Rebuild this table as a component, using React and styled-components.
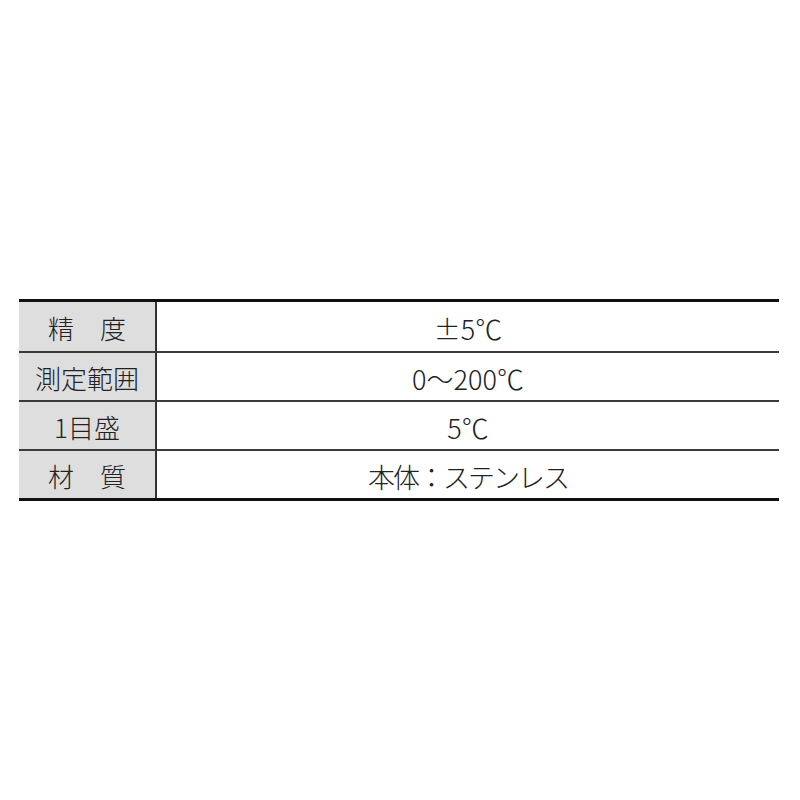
import React from "react";
import styled, { createGlobalStyle } from "styled-components";

const GlobalStyle = createGlobalStyle`
  html, body {
    margin: 0;
    padding: 0;
    background: #ffffff;
  }
  body {
    font-family: "Noto Sans CJK JP", "Noto Sans", sans-serif;
    color: #222222;
  }
`;

const Page = styled.div`
  width: 800px;
  height: 800px;
  box-sizing: border-box;
  padding: 299px 21px 0 19px;
`;

const Table = styled.div`
  display: grid;
  grid-template-columns: 138px 1fr;
  border-top: 3px solid #111111;
  border-bottom: 3px solid #111111;
`;

const Label = styled.div`
  height: 49px;
  display: flex;
  align-items: center;
  justify-content: center;
  padding-top: 3px;
  box-sizing: border-box;
  background: #dedede;
  border-right: 2px solid #333333;
  border-top: ${(p) => (p.$first ? "none" : "2px solid #3a3a3a")};
  font-size: 26px;
  font-weight: 300;
  line-height: 1;
`;

const Value = styled(Label)`
  background: #ffffff;
  border-right: none;
  font-size: 27px;
  letter-spacing: ${(p) => (p.$tight ? "-2px" : "normal")};
`;

const rows = [
  ["精　度", "±5℃"],
  ["測定範囲", "0～200℃"],
  ["1目盛", "5℃"],
  ["材　質", "本体：ステンレス", true],
];

export default function App() {
  return (
    <>
      <GlobalStyle />
      <Page>
        <Table>
          {rows.map(([label, value, tight], i) => (
            <React.Fragment key={label}>
              <Label $first={i === 0}>{label}</Label>
              <Value $first={i === 0} $tight={tight}>
                {value}
              </Value>
            </React.Fragment>
          ))}
        </Table>
      </Page>
    </>
  );
}
